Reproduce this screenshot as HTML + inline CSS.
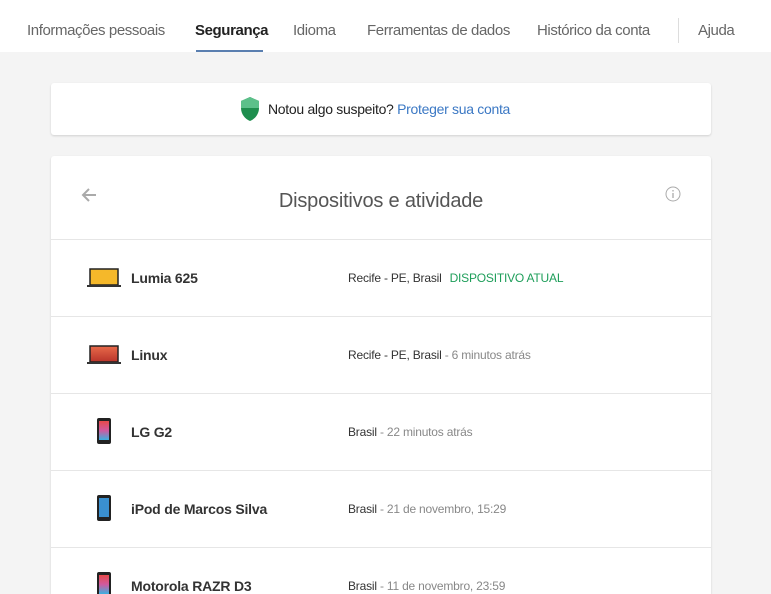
<!DOCTYPE html>
<html><head><meta charset="utf-8"><style>
*{margin:0;padding:0;box-sizing:border-box}
html,body{width:771px;height:594px;overflow:hidden}
body{background:#f4f4f4;font-family:"Liberation Sans",sans-serif;color:#333;position:relative}
.nav{position:absolute;left:0;top:0;width:771px;height:52px;background:#fff}
.nav span{position:absolute;top:22px;font-size:15px;color:#666;letter-spacing:-0.4px;white-space:nowrap}
.nav .act{color:#222;font-weight:bold}
.ul{position:absolute;left:196px;top:50px;width:67px;height:2px;background:#5a7fb0}
.vd{position:absolute;left:678px;top:18px;width:1px;height:25px;background:#ddd}
.card{position:absolute;left:51px;width:660px;background:#fff;border-radius:3px;box-shadow:0 1px 2px rgba(0,0,0,.15)}
.row{position:absolute;left:0;width:660px;height:77px;border-top:1px solid #e6e6e6}
.row .n{position:absolute;left:80px;top:30px;font-size:14px;font-weight:bold;color:#333;letter-spacing:-0.2px}
.row .l{position:absolute;left:297px;top:31px;font-size:12px;color:#333;letter-spacing:-0.2px;white-space:nowrap}
.row .l i{font-style:normal;color:#888}
.row .l b{font-weight:normal;color:#1e9e5a;margin-left:8px}
.ic{position:absolute}
</style></head><body>
<div class="nav">
<span style="left:27px">Informações pessoais</span>
<span class="act" style="left:195px">Segurança</span>
<span style="left:293px">Idioma</span>
<span style="left:367px">Ferramentas de dados</span>
<span style="left:537px">Histórico da conta</span>
<span style="left:698px">Ajuda</span>
<div class="ul"></div><div class="vd"></div>
</div>
<div class="card" style="top:83px;height:52px">
<svg style="position:absolute;left:189px;top:14px" width="20" height="24" viewBox="0 0 20 24"><path d="M10 0L1 4v7c0 6 4 11 9 13 5-2 9-7 9-13V4z" fill="#1e8e4e"/><path d="M10 0L1 4v7h18V4z" fill="#5cc08a"/></svg>
<div style="position:absolute;left:217px;top:18px;font-size:14px;letter-spacing:-0.3px;color:#222">Notou algo suspeito? <span style="color:#3b78c4">Proteger sua conta</span></div>
</div>
<div class="card" style="top:156px;height:438px;overflow:hidden;border-radius:3px 3px 0 0">
<svg style="position:absolute;left:30px;top:31px" width="16" height="16" viewBox="0 0 16 16"><path d="M15 8H2M8 2L2 8l6 6" stroke="#aaa" stroke-width="2" fill="none"/></svg>
<div style="position:absolute;left:0;width:660px;top:34px;text-align:center;font-size:20px;color:#555;letter-spacing:-0.2px">Dispositivos e atividade</div>
<svg style="position:absolute;left:614px;top:30px" width="16" height="16" viewBox="0 0 16 16"><circle cx="8" cy="8" r="7" stroke="#aaa" fill="none"/><path d="M8 7v5M8 4v1.5" stroke="#aaa" stroke-width="1.3"/></svg>
<div class="row" style="top:83px">
<svg class="ic" style="left:36px;top:28px" width="34" height="20"><rect x="3" y="1" width="28" height="16" fill="#f5b82a" stroke="#222" stroke-width="1.5"/><rect x="0" y="17" width="34" height="2" fill="#333"/></svg>
<div class="n">Lumia 625</div><div class="l">Recife - PE, Brasil<b>DISPOSITIVO ATUAL</b></div></div>
<div class="row" style="top:160px">
<svg class="ic" style="left:36px;top:28px" width="34" height="20"><defs><linearGradient id="g" x1="0" y1="0" x2="0" y2="1"><stop offset="0" stop-color="#e86a4a"/><stop offset="1" stop-color="#b8342a"/></linearGradient></defs><rect x="3" y="1" width="28" height="16" fill="url(#g)" stroke="#222" stroke-width="1.5"/><rect x="0" y="17" width="34" height="2" fill="#333"/></svg>
<div class="n">Linux</div><div class="l">Recife - PE, Brasil <i>- 6 minutos atrás</i></div></div>
<div class="row" style="top:237px">
<svg class="ic" style="left:46px;top:24px" width="14" height="26"><defs><linearGradient id="p" x1="0" y1="0" x2="0" y2="1"><stop offset="0" stop-color="#e84a4a"/><stop offset=".5" stop-color="#d05aa0"/><stop offset="1" stop-color="#3ab0e0"/></linearGradient></defs><rect x="0" y="0" width="14" height="26" rx="2" fill="#222"/><rect x="2" y="3" width="10" height="19" fill="url(#p)"/></svg>
<div class="n">LG G2</div><div class="l">Brasil <i>- 22 minutos atrás</i></div></div>
<div class="row" style="top:314px">
<svg class="ic" style="left:46px;top:24px" width="14" height="26"><rect x="0" y="0" width="14" height="26" rx="2" fill="#222"/><rect x="2" y="3" width="10" height="19" fill="#3a90d0"/></svg>
<div class="n">iPod de Marcos Silva</div><div class="l">Brasil <i>- 21 de novembro, 15:29</i></div></div>
<div class="row" style="top:391px">
<svg class="ic" style="left:46px;top:24px" width="14" height="26"><rect x="0" y="0" width="14" height="26" rx="2" fill="#222"/><rect x="2" y="3" width="10" height="19" fill="url(#p)"/></svg>
<div class="n">Motorola RAZR D3</div><div class="l">Brasil <i>- 11 de novembro, 23:59</i></div></div>
</div>
</body></html>
